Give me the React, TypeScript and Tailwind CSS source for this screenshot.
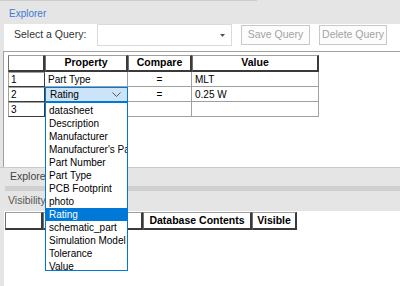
import React from 'react';

const props = [
  'datasheet',
  'Description',
  'Manufacturer',
  "Manufacturer's Part Number",
  'Part Number',
  'Part Type',
  'PCB Footprint',
  'photo',
  'Rating',
  'schematic_part',
  'Simulation Model',
  'Tolerance',
  'Value',
];

const head =
  'flex items-center justify-center font-bold text-[10.5px] text-black border-t border-l border-t-[#a0a0a0] border-l-[#707070] border-r-2 border-b-2 border-[#3a3a3a]';
const rowHead =
  'flex items-center pl-[2px] text-[10px] text-black border-t border-l border-t-[#a0a0a0] border-l-[#a0a0a0] border-r border-b border-r-[#3a3a3a] border-b-[#3a3a3a]';
const cell = 'flex items-center text-[10px] text-black border-r border-b border-[#a0a0a0]';

export default function App() {
  return (
    <div className="relative w-[400px] h-[286px] overflow-hidden bg-[#e5e5e5] font-['Liberation_Sans',Arial,sans-serif]">
      <div className="h-px w-[257px] bg-[#cdcdcd]" />
      <div className="h-[23px] pl-[9px] pt-[7px] text-[10px] leading-[12px] text-[#3b78d8]">Explorer</div>

      {/* top panel */}
      <div className="ml-[4px] h-[143px] bg-white flex flex-col">
        <div className="h-[27px] flex items-start">
          <div className="w-[93px] h-[22px] pl-[10px] flex items-center text-[10.5px] text-[#333]">Select a Query:</div>
          <div className="w-[135px] h-[22px] border border-[#dadada] flex items-center justify-end pr-[6px]">
            <svg width="5" height="3" viewBox="0 0 5 3">
              <path d="M0 0h5L2.5 3z" fill="#555" />
            </svg>
          </div>
          <div className="ml-[9px] mt-[1px] w-[69px] h-[20px] border border-[#c8c8c8] bg-[#fcfcfc] flex items-center justify-center text-[10.5px] text-[#a3a3a3]">
            Save Query
          </div>
          <div className="ml-[9px] mt-[1px] w-[68px] h-[20px] border border-[#c8c8c8] bg-[#fcfcfc] flex items-center justify-center text-[10.5px] text-[#a3a3a3]">
            Delete Query
          </div>
        </div>

        <div className="flex-1 -ml-px border-t border-l border-[#a0a0a0] pt-[3px] pl-[4px]">
          <div className="grid grid-cols-[37px_83px_64px_127px] grid-rows-[17px_15px_15px_15px]">
            <div className={head} />
            <div className={head}>Property</div>
            <div className={head}>Compare</div>
            <div className={head}>Value</div>

            <div className={rowHead}>1</div>
            <div className={cell + ' pl-[3px]'}>Part Type</div>
            <div className={cell + ' justify-center'}>=</div>
            <div className={cell + ' pl-[3px]'}>MLT</div>

            <div className={rowHead}>2</div>
            <div className="flex items-center justify-between pl-[4px] pr-[6px] text-[10px] text-black bg-[#cce4f7] border border-[#0078d7]">
              <span>Rating</span>
              <svg width="9" height="5" viewBox="0 0 9 5">
                <path d="M0.5 0.5L4.5 4.5L8.5 0.5" fill="none" stroke="#555" strokeWidth="1" />
              </svg>
            </div>
            <div className={cell + ' justify-center'}>=</div>
            <div className={cell + ' pl-[3px]'}>0.25 W</div>

            <div className={rowHead}>3</div>
            <div className={cell} />
            <div className={cell} />
            <div className={cell} />
          </div>
        </div>
      </div>

      {/* lower section */}
      <div className="h-px bg-[#c9c9c9]" />
      <div className="h-[18px] pl-[10px] flex items-center text-[10.5px] text-[#444]">Explorer</div>
      <div className="ml-[5px] h-[5px] bg-[#d0d0d0]" />
      <div className="h-[20px] pl-[8px] flex items-center text-[10.5px] text-[#555]">Visibility</div>
      <div className="ml-[4px] h-[75px] bg-white pt-px pl-px">
        <div className="grid grid-cols-[38px_100px_109px_45px] grid-rows-[18px]">
          <div className={head} />
          <div className={head} />
          <div className={head}>Database Contents</div>
          <div className={head}>Visible</div>
        </div>
      </div>

      {/* open dropdown list */}
      <div className="absolute left-[45px] top-[102px] w-[83px] h-[169px] bg-white border border-[#0078d7] overflow-hidden py-px">
        {props.map((p) => (
          <div
            key={p}
            className={
              'h-[13px] pl-[3px] flex items-center whitespace-nowrap text-[10px] ' +
              (p === 'Rating' ? 'bg-[#0078d7] text-white' : 'text-black')
            }
          >
            {p}
          </div>
        ))}
      </div>
    </div>
  );
}
